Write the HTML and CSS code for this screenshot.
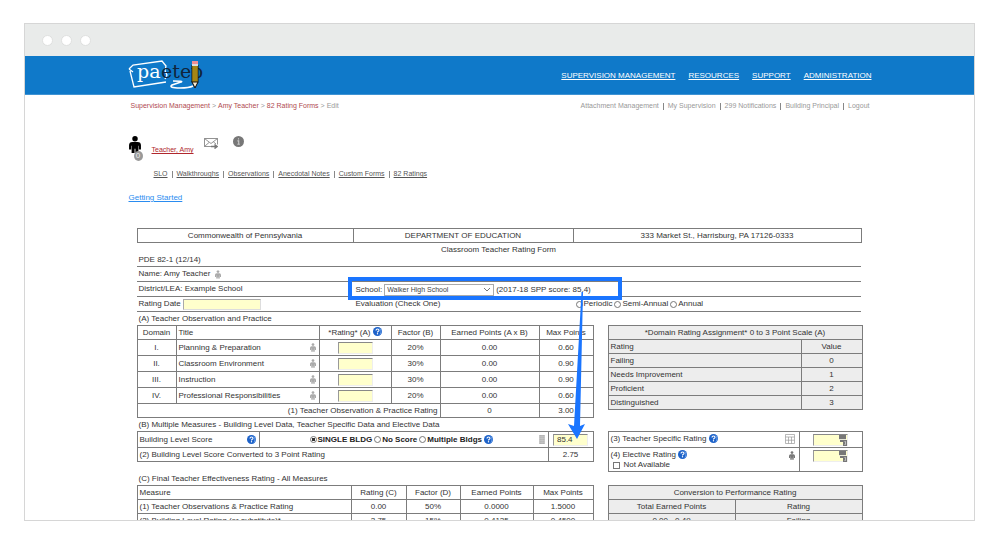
FILE: index.html
```html
<!DOCTYPE html>
<html lang="en">
<head>
<meta charset="utf-8">
<title>82 Rating Forms - Edit</title>
<link rel="stylesheet" href="styles.css">
</head>
<body>
<svg class="defs" aria-hidden="true">
  <symbol id="person" viewBox="0 0 14 20"><circle cx="7" cy="3.200" r="3.200"/><path d="M4 7h6q4 0 4 4v5h-2.500v-4.500h-.5V20H7.500v-5h-1v5H3v-8.500h-.5V16H0v-5q0-4 4-4z"/></symbol>
  <symbol id="help" viewBox="0 0 18 18"><circle cx="9" cy="9" r="9" fill="#1d62c9"/><path d="M12 1A9 9 0 0 1 12 17Q18 9 12 1z" fill="#6ea4ec"/><path d="M6 7Q6 4 9 4t3 2.500Q12 8 10 9q-1 .6-1 2" fill="none" stroke="#fff" stroke-width="2.200"/><circle cx="9" cy="13.600" r="1.400" fill="#fff"/></symbol>
  <symbol id="stamp" viewBox="0 0 9 12"><path d="M0 1h7v4H0zM1 6h7v6H4V8H1z" fill="#777"/><path d="M0 5.500h7M5.500 7.500h1v3h-1" fill="none" stroke="#ddd" stroke-width=".7"/></symbol>
</svg>
<div class="window">
  <div class="chrome"><i></i><i></i><i></i></div>
  <header class="topbar">
    <div class="wrap topbar-in">
      <svg class="logo" viewBox="0 0 76 30" role="img" aria-label="paetep">
        <path d="M1 9 5 5 34 1l4 5-1 5 2 4-2 4M1 9l4 3M2 11l4 16 32-5" fill="none" stroke="#fff" stroke-width="1.300"/>
        <path d="M45 21q11 0 8 1l-9 3q-4 3 8 3 9 0 13-2" fill="none" stroke="#fff" stroke-width="1.600"/>
        <text x="9" y="18" class="logo-text" fill="#fff">pa</text>
        <text x="33" y="18" class="logo-text" fill="#10253c">etep</text>
        <path d="M64 5h6v17l-3 5-3-5z" fill="#f5c518" stroke="#111"/><path d="M66 6v16M68 6v16" stroke="#111" stroke-width=".7"/>
        <path d="M64 22h6l-3 6z" fill="#f6ead0" stroke="#111"/><path d="M66 26h2l-1 2z"/>
        <path d="M64 1h6v3h-6z" fill="#f08f95"/><path d="M64 4h6v2h-6z" fill="#ddd"/>
      </svg>
      <nav class="main-nav">
        <a href="#">SUPERVISION MANAGEMENT</a><a href="#">RESOURCES</a><a href="#">SUPPORT</a><a href="#">ADMINISTRATION</a>
      </nav>
    </div>
  </header>
  <main class="wrap">
    <div class="crumb-row">
      <nav class="crumbs"><a href="#">Supervision Management</a><span>&gt;</span><a href="#">Amy Teacher</a><span>&gt;</span><a href="#">82 Rating Forms</a><span>&gt;</span><span>Edit</span></nav>
      <nav class="user-nav"><a href="#">Attachment Management</a><a href="#">My Supervision</a><a href="#">299 Notifications</a><a href="#">Building Principal</a><a href="#">Logout</a></nav>
    </div>
    <div class="teacher">
      <div class="avatar"><svg viewBox="0 0 14 20"><use href="#person"/></svg><span class="badge">0</span></div>
      <a class="teacher-name" href="#">Teacher, Amy</a>
      <svg class="mail" viewBox="0 0 14 12"><g fill="none" stroke="#777" stroke-width=".8"><path d="M8 9.500H.5v-8h13v6M.5 1.500 7 6.500l6.500-5M.5 9.500l4.500-4M12 7 9.500 5"/><path d="M7 9.500h5M10.500 7.500l2.500 2-2.500 2" stroke-width="1.500"/></g></svg>
      <svg class="info" viewBox="0 0 10 10"><circle cx="5" cy="5" r="5" fill="#777"/><path d="M5 2v1.200M4 4.400h1.200v3M4 7.500h2.200" stroke="#ccc" fill="none"/></svg>
    </div>
    <nav class="sub-nav"><a href="#">SLO</a><a href="#">Walkthroughs</a><a href="#">Observations</a><a href="#">Anecdotal Notes</a><a href="#">Custom Forms</a><a href="#">82 Ratings</a></nav>
    <a class="start" href="#">Getting Started</a>

    <form class="form">
      <table class="head">
        <colgroup><col class="w216"><col class="w220"><col class="w288"></colgroup>
        <tr><td>Commonwealth of Pennsylvania</td><td>DEPARTMENT OF EDUCATION</td><td>333 Market St., Harrisburg, PA 17126-0333</td></tr>
      </table>
      <div class="title-block"><h1>Classroom Teacher Rating Form</h1><p>PDE 82-1 (12/14)</p></div>
      <div class="line">Name: Amy Teacher<svg class="mini" viewBox="0 0 14 20"><use href="#person"/></svg></div>
      <div class="line">
        <span>District/LEA: Example School</span>
        <span class="school"><label for="school">School:</label><select id="school"><option>Walker High School</option></select><span>(2017-18 SPP score: 85.4)</span></span>
      </div>
      <div class="line">
        <span class="date"><label for="date">Rating Date</label><input class="field" id="date" type="text"></span>
        <span>Evaluation (Check One)</span>
        <span class="period"><label><input type="radio" name="period">Periodic</label><label><input type="radio" name="period">Semi-Annual</label><label><input type="radio" name="period">Annual</label></span>
      </div>

      <div class="sections">
        <h2>(A) Teacher Observation and Practice</h2>
        <table class="a">
          <colgroup><col class="w39"><col class="w143"><col class="w72"><col class="w49"><col class="w99"><col class="w54"></colgroup>
          <tr><td>Domain</td><td class="l">Title</td><td>*Rating* (A) <svg class="help"><use href="#help"/></svg></td><td>Factor (B)</td><td>Earned Points (A x B)</td><td>Max Points</td></tr>
          <tr class="tall"><td>I.</td><td class="l"><div class="split">Planning &amp; Preparation<svg class="mini"><use href="#person"/></svg></div></td><td><input class="field" type="text" aria-label="Planning rating"></td><td>20%</td><td>0.00</td><td>0.60</td></tr>
          <tr class="tall"><td>II.</td><td class="l"><div class="split">Classroom Environment<svg class="mini"><use href="#person"/></svg></div></td><td><input class="field" type="text" aria-label="Environment rating"></td><td>30%</td><td>0.00</td><td>0.90</td></tr>
          <tr class="tall"><td>III.</td><td class="l"><div class="split">Instruction<svg class="mini"><use href="#person"/></svg></div></td><td><input class="field" type="text" aria-label="Instruction rating"></td><td>30%</td><td>0.00</td><td>0.90</td></tr>
          <tr class="tall"><td>IV.</td><td class="l"><div class="split">Professional Responsibilities<svg class="mini"><use href="#person"/></svg></div></td><td><input class="field" type="text" aria-label="Professional rating"></td><td>20%</td><td>0.00</td><td>0.60</td></tr>
          <tr><td class="r" colspan="4">(1) Teacher Observation &amp; Practice Rating</td><td>0</td><td>3.00</td></tr>
        </table>
        <table class="shade">
          <colgroup><col class="w193"><col class="w61"></colgroup>
          <tr><td colspan="2">*Domain Rating Assignment* 0 to 3 Point Scale (A)</td></tr>
          <tr><td class="l">Rating</td><td>Value</td></tr>
          <tr><td class="l">Failing</td><td>0</td></tr>
          <tr><td class="l">Needs Improvement</td><td>1</td></tr>
          <tr><td class="l">Proficient</td><td>2</td></tr>
          <tr><td class="l">Distinguished</td><td>3</td></tr>
        </table>

        <h2>(B) Multiple Measures - Building Level Data, Teacher Specific Data and Elective Data</h2>
        <table>
          <colgroup><col class="w122"><col class="w289"><col class="w45"></colgroup>
          <tr class="tall"><td class="l"><div class="split">Building Level Score<svg class="help"><use href="#help"/></svg></div></td>
            <td><div class="split choices"><span class="bldg"><label><input type="radio" name="bldg" checked>SINGLE BLDG</label><label><input type="radio" name="bldg">No Score</label><label><input type="radio" name="bldg">Multiple Bldgs</label><svg class="help"><use href="#help"/></svg></span><svg class="grid-icon" viewBox="0 0 6 10"><path d="M0 0h6v10H0z" fill="#aaa"/><path d="M2 0v10M4 0v10M0 2h6M0 4h6M0 6h6M0 8h6" stroke="#ddd" stroke-width=".5"/></svg></div></td>
            <td><input class="field" type="text" value="85.4" aria-label="Building level score"></td></tr>
          <tr><td class="l" colspan="2">(2) Building Level Score Converted to 3 Point Rating</td><td>2.75</td></tr>
        </table>
        <table class="specific">
          <colgroup><col class="w191"><col class="w63"></colgroup>
          <tr class="tall"><td class="l"><div class="split"><span>(3) Teacher Specific Rating <svg class="help"><use href="#help"/></svg></span><svg class="calc" viewBox="0 0 10 10"><path d="M.5.5h9v9h-9zM.5 3h9M.5 6.200h9M3.500 3v6.500M6.500 3v6.500" fill="none" stroke="#999" stroke-width=".7"/></svg></div></td><td><span class="stamped"><input class="field" type="text" aria-label="Teacher specific rating"><svg><use href="#stamp"/></svg></span></td></tr>
          <tr class="double"><td class="l"><div class="split"><span>(4) Elective Rating <svg class="help"><use href="#help"/></svg></span><svg class="mini dark"><use href="#person"/></svg></div><label class="na"><input type="checkbox">Not Available</label></td><td><span class="stamped"><input class="field" type="text" aria-label="Elective rating"><svg><use href="#stamp"/></svg></span></td></tr>
        </table>

        <h2>(C) Final Teacher Effectiveness Rating - All Measures</h2>
        <table>
          <colgroup><col class="w214"><col class="w55"><col class="w54"><col class="w73"><col class="w60"></colgroup>
          <tr><td class="l">Measure</td><td>Rating (C)</td><td>Factor (D)</td><td>Earned Points</td><td>Max Points</td></tr>
          <tr><td class="l">(1) Teacher Observations &amp; Practice Rating</td><td>0.00</td><td>50%</td><td>0.0000</td><td>1.5000</td></tr>
          <tr><td class="l">(2) Building Level Rating (or substitute)*</td><td>2.75</td><td>15%</td><td>0.4125</td><td>0.4500</td></tr>
        </table>
        <table class="shade">
          <colgroup><col class="w127"><col class="w127"></colgroup>
          <tr><td colspan="2">Conversion to Performance Rating</td></tr>
          <tr><td>Total Earned Points</td><td>Rating</td></tr>
          <tr><td>0.00 - 0.49</td><td>Failing</td></tr>
        </table>
      </div>
      <div class="highlight"></div>
      <svg class="arrow" viewBox="0 0 18 148"><path d="M14.500 0H16L13 134l5-2-8 15-9-15 6 2z" fill="#1a75ff"/></svg>
    </form>
  </main>
</div>
</body>
</html>
```
FILE: styles.css
```css
* { box-sizing: border-box; }
body {
  margin: 0;
  height: 100vh;
  padding: 23px 25px 39px 24px;
  display: flex;
  background: #fff;
  color: #333;
  font: 8px/10px "Liberation Sans", Arial, sans-serif;
}
h1, h2, p { margin: 0; font: inherit; }
svg { display: inline-block; vertical-align: middle; fill: currentColor; }
.defs { position: absolute; width: 0; height: 0; }
.window { flex: 1; min-width: 0; overflow: hidden; border: 1px solid #d6d6d6; }
.chrome { height: 32px; padding: 0 17px; display: flex; align-items: center; gap: 8px; background: #e9ebea; }
.chrome i { width: 11px; height: 11px; border-radius: 50%; background: #fff; border: 1px solid #dfe0df; }
.wrap { max-width: 744px; margin: 0 auto; }
.topbar { background: #0f79c9; border-bottom: 1px solid #3f93d3; }
.topbar-in { height: 38px; display: flex; align-items: center; justify-content: space-between; }
.logo { width: 76px; height: 30px; }
.logo-text { font: 19px "DejaVu Serif", serif; }
.main-nav { display: flex; gap: 13px; padding-top: 2px; }
.main-nav a { color: #fff; }

.crumb-row { display: flex; justify-content: space-between; padding: 6px 2px 0 3px; font-size: 7px; color: #999; }
.crumbs { display: flex; gap: 2px; }
.crumbs a { color: #b04a50; text-decoration: none; }
.user-nav { display: flex; }
.user-nav a { color: #999; text-decoration: none; }
.user-nav a + a, .sub-nav a + a { display: flex; align-items: center; }
.user-nav a + a::before, .sub-nav a + a::before { content: ""; width: 1px; height: 7px; margin: 0 4px; background: #888; }

.teacher { display: flex; height: 27px; margin-top: 25px; padding-left: 1px; }
.avatar { position: relative; width: 23px; }
.avatar > svg { width: 12px; height: 17px; color: #000; display: block; }
.badge { position: absolute; left: 5px; top: 15px; width: 9px; height: 10px; border-radius: 50%; background: #999; color: #eee; text-align: center; }
.teacher-name { align-self: flex-start; margin-top: 9px; font-size: 7px; color: #b0272d; }
.mail { width: 14px; height: 12px; margin: 1px 15px 0 10px; }
.info { width: 11px; height: 11px; }
.sub-nav { display: flex; margin: 6px 0 0 26px; font-size: 7px; color: #555; }
.sub-nav a { color: #555; }
.start { display: inline-block; margin: 14px 0 0 1px; color: #2a8cf0; }

.form { position: relative; margin: 25px 11px 0 9px; }
table { width: 100%; table-layout: fixed; border-collapse: collapse; align-self: start; }
tr { height: 14px; }
.tall { height: 16px; }
.double { height: 24px; }
td { padding: 0 2px; border: 1px solid #7c7c7c; text-align: center; white-space: nowrap; }
.l { text-align: left; }
.r { text-align: right; }
.title-block { height: 24px; padding: 2px 2px 0; border-bottom: 1px solid #7c7c7c; }
h1 { text-align: center; }
.line { height: 15px; padding-left: 2px; border-bottom: 1px solid #7c7c7c; display: grid; grid-template-columns: 217fr 220fr 285fr; align-items: center; }
.line:has(> .mini) { display: flex; gap: 5px; }
.school { grid-column: 2 / 4; display: flex; align-items: center; gap: 2px; padding-top: 1px; }
select { width: 110px; height: 12px; padding: 0 2px; border: 1px solid #aaa; border-radius: 0; appearance: none; color: #444; font: 7px/10px "Liberation Sans", Arial, sans-serif;
  background: linear-gradient(45deg, transparent 40%, #777 40%, #777 65%, transparent 65%) right 6px center / 3px 3px no-repeat, linear-gradient(-45deg, transparent 40%, #777 40%, #777 65%, transparent 65%) right 3px center / 3px 3px no-repeat, #fff; }
.date { display: flex; gap: 2px; }
.field { display: block; width: 35px; height: 12px; padding: 0 3px; margin: 0 auto; border: 1px solid; border-color: #888 #eee #eee #999; border-radius: 0; background: #ffffcc; color: #333; font: 8px/10px "Liberation Sans", Arial, sans-serif; }
.date .field { width: 78px; height: 11px; margin: 0; border-color: #aaa #ddd #ddd #aaa; }
.period, .bldg { display: flex; align-items: center; gap: 2px; }
.bldg { font-weight: bold; color: #222; }
label { display: inline-flex; align-items: center; gap: 1px; }
input[type="radio"], input[type="checkbox"] { appearance: none; width: 7px; height: 7px; margin: 0; border: 1px solid #777; background: #fff; }
input[type="radio"] { border-radius: 50%; }
input[type="radio"]:checked { background: radial-gradient(circle, #333 45%, #fff 50%); }
.mini { width: 6px; height: 9px; color: #aaa; }
.mini.dark { color: #777; }
.help { width: 9px; height: 9px; margin-top: -1px; }
.split { display: flex; align-items: center; justify-content: space-between; padding-right: 1px; }
.split .help { flex: none; }
.choices { padding: 0 1px 0 48px; }
.grid-icon { width: 6px; height: 9px; }
.calc { width: 10px; height: 10px; }
.sections { display: grid; grid-template-columns: 456fr 254fr; column-gap: 14px; }
h2 { grid-column: 1 / -1; height: 13px; padding: 2px 2px 0; }
.shade { background: #ededed; }
.specific .split { padding-right: 2px; }
.specific td { vertical-align: top; padding-top: 2px; }
.stamped { position: relative; display: block; width: 35px; margin: 0 auto; }
.stamped svg { position: absolute; right: 0; top: 0; width: 9px; height: 12px; }
.na { display: flex; padding-left: 2px; gap: 4px; }

.w39 { width: 39px; } .w143 { width: 143px; } .w72 { width: 72px; } .w49 { width: 49px; } .w99 { width: 99px; } .w54 { width: 54px; }
.w216 { width: 216px; } .w220 { width: 220px; } .w288 { width: 288px; }
.w193 { width: 193px; } .w61 { width: 61px; } .w191 { width: 191px; } .w63 { width: 63px; } .w127 { width: 127px; }
.w122 { width: 122px; } .w289 { width: 289px; } .w45 { width: 45px; }
.w214 { width: 214px; } .w55 { width: 55px; } .w73 { width: 73px; } .w60 { width: 60px; }

.highlight { position: absolute; left: 211px; top: 49px; width: 274px; height: 23px; border: 4px solid #1a75ff; }
.arrow { position: absolute; left: 430px; top: 64px; width: 18px; height: 148px; }
```
